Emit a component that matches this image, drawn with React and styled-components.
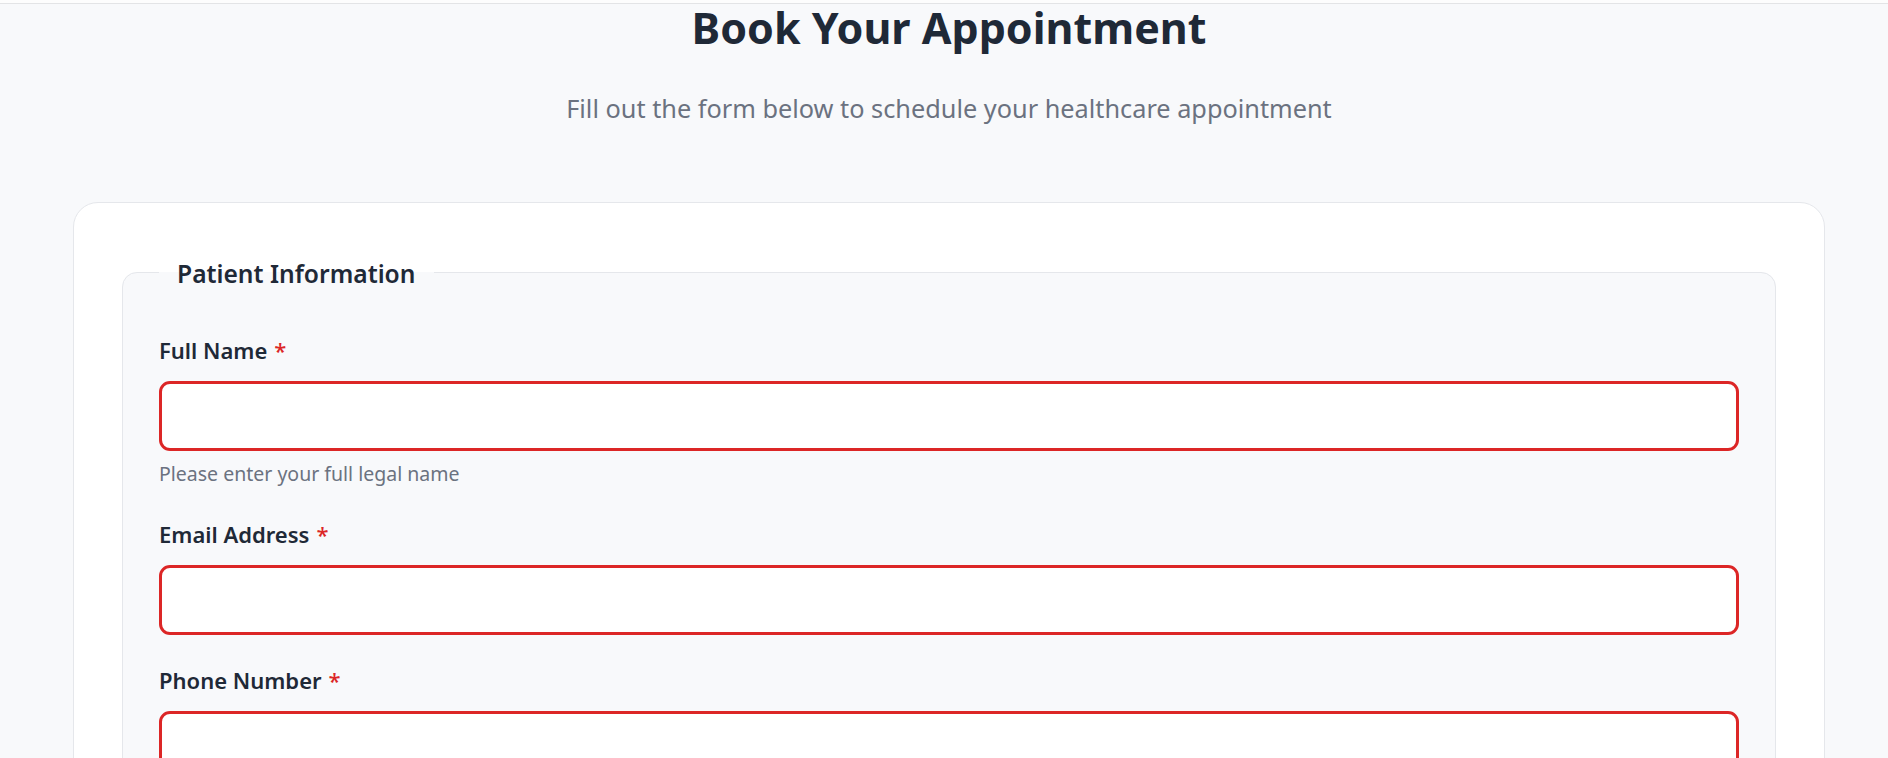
import React from "react";
import styled, { createGlobalStyle } from "styled-components";

const GlobalStyle = createGlobalStyle`
  html, body {
    margin: 0;
    padding: 0;
    background: #f8f9fb;
    font-family: "Noto Sans", "Open Sans", sans-serif;
    color: #1f2937;
  }
  * { box-sizing: border-box; }
`;

const TopBar = styled.header`
  height: 4px;
  background: #fdfdfd;
  border-bottom: 1px solid #e3e4e6;
`;

const Page = styled.main`
  padding: 0 63px 40px 73px;
`;

const Hero = styled.section`
  text-align: center;
`;

const Title = styled.h1`
  margin: 0;
  font-size: 43px;
  line-height: 48px;
  font-weight: 700;
  color: #1f2937;
`;

const Subtitle = styled.p`
  margin: 38px 0 0;
  font-size: 25.3px;
  line-height: 36px;
  color: #6b7280;
`;

const Card = styled.div`
  margin-top: 76px;
  background: #ffffff;
  border: 1px solid #e5e7eb;
  border-radius: 25px;
  padding: 48px;
`;

const Fieldset = styled.fieldset`
  margin: 0;
  background: #f8f9fb;
  border: 1px solid #e5e7eb;
  border-radius: 15px;
  padding: 0 36px 32px;
  min-width: 0;
`;

const Legend = styled.legend`
  padding: 3px 18px 0;
  font-size: 24.6px;
  line-height: 40px;
  font-weight: 600;
  color: #1f2937;
`;

const Group = styled.div`
  display: flex;
  flex-direction: column;
  margin-top: ${(p) => (p.$first ? "41px" : "30px")};
`;

const Label = styled.label`
  font-size: 22px;
  line-height: 30px;
  font-weight: 600;
  color: #1f2937;
`;

const Req = styled.span`
  color: #dc2626;
  margin-left: 7px;
  font-weight: 500;
`;

const Input = styled.input`
  margin-top: 16px;
  height: 70px;
  width: 100%;
  background: #ffffff;
  border: 3px solid #dc2626;
  border-radius: 11px;
  padding: 0 18px;
  font-size: 20px;
  font-family: inherit;
  outline: none;
`;

const Help = styled.small`
  margin-top: 8px;
  font-size: 19.5px;
  line-height: 30px;
  color: #6b7280;
`;

const fields = [
  { id: "name", label: "Full Name", type: "text", help: "Please enter your full legal name" },
  { id: "email", label: "Email Address", type: "email" },
  { id: "phone", label: "Phone Number", type: "tel" },
];

export default function App() {
  return (
    <>
      <GlobalStyle />
      <TopBar />
      <Page>
        <Hero>
          <Title>Book Your Appointment</Title>
          <Subtitle>Fill out the form below to schedule your healthcare appointment</Subtitle>
        </Hero>
        <Card>
          <Fieldset>
            <Legend>Patient Information</Legend>
            {fields.map((f, i) => (
              <Group key={f.id} $first={i === 0}>
                <Label htmlFor={f.id}>
                  {f.label}
                  <Req>*</Req>
                </Label>
                <Input id={f.id} type={f.type} />
                {f.help && <Help>{f.help}</Help>}
              </Group>
            ))}
          </Fieldset>
        </Card>
      </Page>
    </>
  );
}
